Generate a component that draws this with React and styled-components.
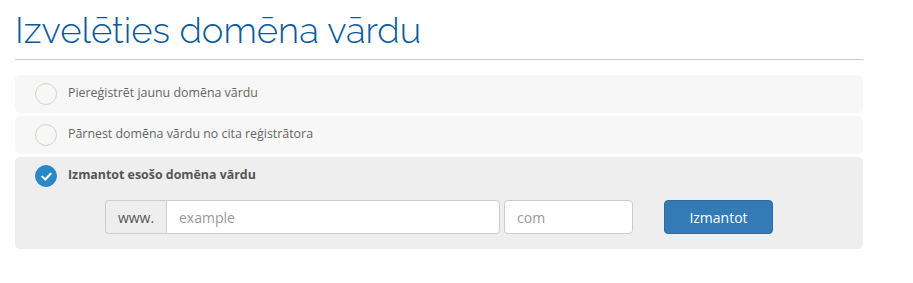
import React from "react";
import styled, { createGlobalStyle } from "styled-components";

const Global = createGlobalStyle`
  html, body { margin: 0; padding: 0; background: #fff; }
  body { font-family: "Open Sans", "Liberation Sans", sans-serif; }
  * { box-sizing: border-box; }
`;

const Page = styled.div`
  width: 848px;
  margin-left: 15px;
  padding-top: 9px;
`;

const Title = styled.h1`
  margin: 0;
  font-family: "Raleway", "Lato", "Open Sans", sans-serif;
  font-weight: 300;
  font-size: 36.5px;
  line-height: 44px;
  color: #0d5a9a;
  padding-bottom: 6px;
  border-bottom: 1px solid #c8c8c8;
`;

const List = styled.div`
  margin-top: 15px;
  display: flex;
  flex-direction: column;
  gap: 3px;
`;

const Row = styled.div`
  background: ${(p) => (p.$active ? "#eeeeee" : "#f7f7f7")};
  border-radius: 5px;
  padding: 6px 0 ${(p) => (p.$active ? "15px" : "6px")} 20px;
`;

const Option = styled.label`
  display: flex;
  align-items: center;
  gap: 11px;
  height: 26px;
  cursor: pointer;
`;

const Radio = styled.span`
  width: 22px;
  height: 22px;
  border-radius: 50%;
  flex: none;
  display: flex;
  align-items: center;
  justify-content: center;
  border: 1px solid ${(p) => (p.$checked ? "#2a87c8" : "#d6d3cc")};
  background: ${(p) => (p.$checked ? "#2a87c8" : "transparent")};
`;

const Label = styled.span`
  font-size: 12.4px;
  color: ${(p) => (p.$checked ? "#555" : "#666")};
  font-weight: ${(p) => (p.$checked ? 700 : 400)};
  margin-top: -4px;
`;

const Form = styled.div`
  display: flex;
  align-items: center;
  margin-top: 11px;
  padding-left: 70px;
`;

const Group = styled.div`
  display: flex;
  height: 34px;
`;

const Addon = styled.span`
  display: flex;
  align-items: center;
  justify-content: center;
  width: 61px;
  background: #eee;
  border: 1px solid #ccc;
  border-right: none;
  border-radius: 4px 0 0 4px;
  color: #555;
  font-size: 14px;
`;

const Input = styled.input`
  height: 34px;
  width: ${(p) => p.$w}px;
  border: 1px solid #ccc;
  border-radius: ${(p) => (p.$joined ? "0 4px 4px 0" : "4px")};
  background: #fff;
  padding: 0 12px;
  font-family: "Open Sans", "Liberation Sans", sans-serif;
  font-size: 14px;
  color: #555;
  outline: none;
  &::placeholder { color: #999; }
`;

const Tld = styled(Input)`
  margin-left: 4px;
`;

const Button = styled.button`
  margin-left: 31px;
  width: 109px;
  height: 34px;
  background: #337ab7;
  border: 1px solid #2e6da4;
  border-radius: 4px;
  color: #fff;
  font-family: "Open Sans", "Liberation Sans", sans-serif;
  font-size: 14px;
  cursor: pointer;
`;

const Check = () => (
  <svg width="13" height="13" viewBox="0 0 12 12">
    <path d="M2.2 6.2 L4.9 8.7 L9.8 3.5" fill="none" stroke="#fff" strokeWidth="2" strokeLinecap="round" strokeLinejoin="round" />
  </svg>
);

export default function App() {
  return (
    <>
      <Global />
      <Page>
        <Title>Izvelēties domēna vārdu</Title>
        <List>
          <Row>
            <Option>
              <Radio />
              <Label>Piereģistrēt jaunu domēna vārdu</Label>
            </Option>
          </Row>
          <Row>
            <Option>
              <Radio />
              <Label>Pārnest domēna vārdu no cita reģistrātora</Label>
            </Option>
          </Row>
          <Row $active>
            <Option>
              <Radio $checked>
                <Check />
              </Radio>
              <Label $checked>Izmantot esošo domēna vārdu</Label>
            </Option>
            <Form>
              <Group>
                <Addon>www.</Addon>
                <Input $joined $w={334} placeholder="example" />
              </Group>
              <Tld $w={129} placeholder="com" />
              <Button>Izmantot</Button>
            </Form>
          </Row>
        </List>
      </Page>
    </>
  );
}
